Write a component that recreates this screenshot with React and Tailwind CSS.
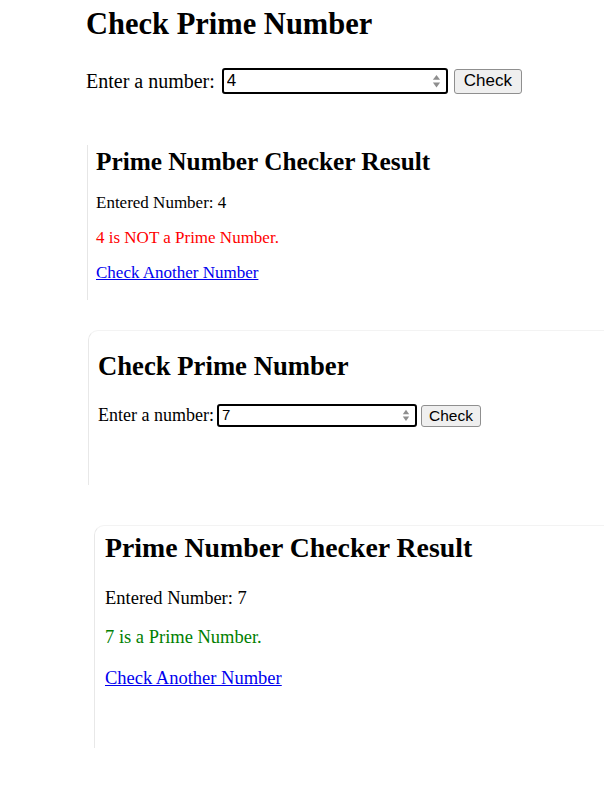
import React from "react";

function Spinner({ size = 10 }) {
  return (
    <svg width={size} height={size * 1.6} viewBox="0 0 10 16" className="shrink-0">
      <path d="M5 1 L9 6.5 L1 6.5 Z" fill="#8e8e8e" />
      <path d="M5 15 L9 9.5 L1 9.5 Z" fill="#8e8e8e" />
    </svg>
  );
}

function NumberField({ value, w, h, fs, spin }) {
  return (
    <div
      className={`flex items-center justify-between border-2 border-black rounded-[3px] bg-white pl-[3px] pr-[5px] ${w} ${h}`}
    >
      <input
        type="text"
        readOnly
        value={value}
        className={`w-full bg-transparent outline-none font-['Liberation_Sans',Arial,sans-serif] text-black ${fs}`}
      />
      <Spinner size={spin} />
    </div>
  );
}

function CheckButton({ w, h, fs }) {
  return (
    <button
      className={`flex items-center justify-center bg-[#efefef] border border-[#8f8f8f] rounded-[3px] font-['Liberation_Sans',Arial,sans-serif] text-black ${w} ${h} ${fs}`}
    >
      Check
    </button>
  );
}

export default function App() {
  return (
    <div className="w-[604px] min-h-[793px] bg-white text-black font-['Liberation_Serif','Times_New_Roman',serif] overflow-hidden">
      {/* ===== first form ===== */}
      <div className="pl-[86px] pt-[4px]">
        <h1 className="text-[30.5px] font-bold leading-[40px]">Check Prime Number</h1>
        <div className="mt-[24px] flex items-center h-[26px]">
          <label className="text-[20px] leading-[26px]">Enter a number:</label>
          <div className="ml-[7px]">
            <NumberField value="4" w="w-[226px]" h="h-[26px]" fs="text-[17px]" spin={9} />
          </div>
          <div className="ml-[6px]">
            <CheckButton w="w-[68px]" h="h-[25px]" fs="text-[17px]" />
          </div>
        </div>
      </div>

      {/* ===== first result ===== */}
      <div className="ml-[87px] mt-[51px] h-[155px] border-l border-[#e6e6e6] pl-[8px]">
        <h2 className="text-[25.3px] font-bold leading-[32px]">Prime Number Checker Result</h2>
        <p className="mt-[15px] text-[17px] leading-[22px]">Entered Number: 4</p>
        <p className="mt-[13px] text-[17px] leading-[22px] text-[#ff0000]">4 is NOT a Prime Number.</p>
        <p className="mt-[13px] text-[17px] leading-[22px]">
          <a href="#" className="text-[#0000ee] underline">Check Another Number</a>
        </p>
      </div>

      {/* ===== second form ===== */}
      <div className="ml-[88px] mt-[30px] h-[155px] border-l border-t border-l-[#e8e8e8] border-t-[#f3f3f3] rounded-tl-[10px] pl-[9px] pt-[18px]">
        <h1 className="text-[26.7px] font-bold leading-[34px]">Check Prime Number</h1>
        <div className="mt-[21px] flex items-center h-[23px]">
          <label className="text-[18px] leading-[23px]">Enter a number:</label>
          <div className="ml-[3px]">
            <NumberField value="7" w="w-[200px]" h="h-[23px]" fs="text-[15px]" spin={8} />
          </div>
          <div className="ml-[4px]">
            <CheckButton w="w-[60px]" h="h-[22px]" fs="text-[15.5px]" />
          </div>
        </div>
      </div>

      {/* ===== second result ===== */}
      <div className="ml-[94px] mt-[40px] h-[223px] border-l border-t border-l-[#e8e8e8] border-t-[#f3f3f3] rounded-tl-[10px] pl-[10px] pt-[4px]">
        <h2 className="text-[27.8px] font-bold leading-[36px]">Prime Number Checker Result</h2>
        <p className="mt-[20px] text-[18.5px] leading-[24px]">Entered Number: 7</p>
        <p className="mt-[15px] text-[18.5px] leading-[24px] text-[#008000]">7 is a Prime Number.</p>
        <p className="mt-[17px] text-[18.5px] leading-[24px]">
          <a href="#" className="text-[#0000ee] underline">Check Another Number</a>
        </p>
      </div>
    </div>
  );
}
